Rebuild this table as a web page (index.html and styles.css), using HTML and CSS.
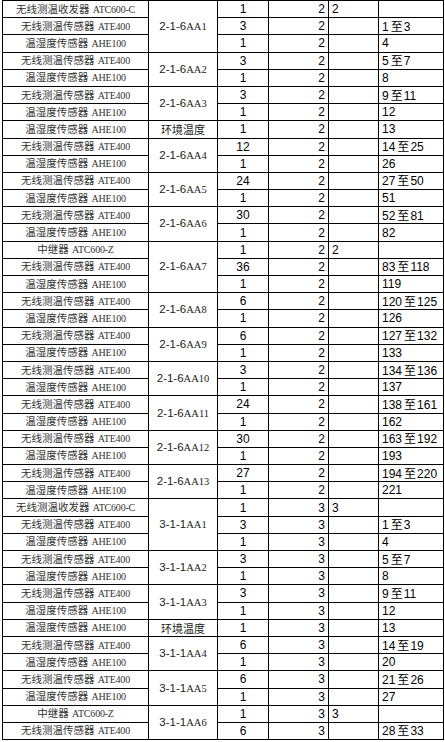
FILE: index.html
```html
<!DOCTYPE html>
<html>
<head>
<meta charset="utf-8">
<link rel="stylesheet" href="styles.css">
</head>
<body>
<table class="sheet">
<colgroup>
<col class="c1"><col class="c2"><col class="c3"><col class="c4"><col class="c5"><col class="c6">
</colgroup>
<tbody>
<tr><td class="dev"><span class="cn">无线测温收发器</span> <span class="en">ATC600-C</span></td><td class="loc" rowspan="3">2-1-6<span class="aa">AA1</span></td><td class="qty">1</td><td class="lay">2</td><td class="ch">2</td><td class="no"></td></tr>
<tr><td class="dev"><span class="cn">无线测温传感器</span> <span class="en">ATE400</span></td><td class="qty">3</td><td class="lay">2</td><td class="ch"></td><td class="no">1<span class="to">至</span>3</td></tr>
<tr><td class="dev"><span class="cn">温湿度传感器</span> <span class="en">AHE100</span></td><td class="qty">1</td><td class="lay">2</td><td class="ch"></td><td class="no">4</td></tr>

<tr><td class="dev"><span class="cn">无线测温传感器</span> <span class="en">ATE400</span></td><td class="loc" rowspan="2">2-1-6<span class="aa">AA2</span></td><td class="qty">3</td><td class="lay">2</td><td class="ch"></td><td class="no">5<span class="to">至</span>7</td></tr>
<tr><td class="dev"><span class="cn">温湿度传感器</span> <span class="en">AHE100</span></td><td class="qty">1</td><td class="lay">2</td><td class="ch"></td><td class="no">8</td></tr>

<tr><td class="dev"><span class="cn">无线测温传感器</span> <span class="en">ATE400</span></td><td class="loc" rowspan="2">2-1-6<span class="aa">AA3</span></td><td class="qty">3</td><td class="lay">2</td><td class="ch"></td><td class="no">9<span class="to">至</span>11</td></tr>
<tr><td class="dev"><span class="cn">温湿度传感器</span> <span class="en">AHE100</span></td><td class="qty">1</td><td class="lay">2</td><td class="ch"></td><td class="no">12</td></tr>

<tr><td class="dev"><span class="cn">温湿度传感器</span> <span class="en">AHE100</span></td><td class="loc env">环境温度</td><td class="qty">1</td><td class="lay">2</td><td class="ch"></td><td class="no">13</td></tr>

<tr><td class="dev"><span class="cn">无线测温传感器</span> <span class="en">ATE400</span></td><td class="loc" rowspan="2">2-1-6<span class="aa">AA4</span></td><td class="qty">12</td><td class="lay">2</td><td class="ch"></td><td class="no">14<span class="to">至</span>25</td></tr>
<tr><td class="dev"><span class="cn">温湿度传感器</span> <span class="en">AHE100</span></td><td class="qty">1</td><td class="lay">2</td><td class="ch"></td><td class="no">26</td></tr>

<tr><td class="dev"><span class="cn">无线测温传感器</span> <span class="en">ATE400</span></td><td class="loc" rowspan="2">2-1-6<span class="aa">AA5</span></td><td class="qty">24</td><td class="lay">2</td><td class="ch"></td><td class="no">27<span class="to">至</span>50</td></tr>
<tr><td class="dev"><span class="cn">温湿度传感器</span> <span class="en">AHE100</span></td><td class="qty">1</td><td class="lay">2</td><td class="ch"></td><td class="no">51</td></tr>

<tr><td class="dev"><span class="cn">无线测温传感器</span> <span class="en">ATE400</span></td><td class="loc" rowspan="2">2-1-6<span class="aa">AA6</span></td><td class="qty">30</td><td class="lay">2</td><td class="ch"></td><td class="no">52<span class="to">至</span>81</td></tr>
<tr><td class="dev"><span class="cn">温湿度传感器</span> <span class="en">AHE100</span></td><td class="qty">1</td><td class="lay">2</td><td class="ch"></td><td class="no">82</td></tr>

<tr><td class="dev"><span class="cn">中继器</span> <span class="en">ATC600-Z</span></td><td class="loc" rowspan="3">2-1-6<span class="aa">AA7</span></td><td class="qty">1</td><td class="lay">2</td><td class="ch">2</td><td class="no"></td></tr>
<tr><td class="dev"><span class="cn">无线测温传感器</span> <span class="en">ATE400</span></td><td class="qty">36</td><td class="lay">2</td><td class="ch"></td><td class="no">83<span class="to">至</span>118</td></tr>
<tr><td class="dev"><span class="cn">温湿度传感器</span> <span class="en">AHE100</span></td><td class="qty">1</td><td class="lay">2</td><td class="ch"></td><td class="no">119</td></tr>

<tr><td class="dev"><span class="cn">无线测温传感器</span> <span class="en">ATE400</span></td><td class="loc" rowspan="2">2-1-6<span class="aa">AA8</span></td><td class="qty">6</td><td class="lay">2</td><td class="ch"></td><td class="no">120<span class="to">至</span>125</td></tr>
<tr><td class="dev"><span class="cn">温湿度传感器</span> <span class="en">AHE100</span></td><td class="qty">1</td><td class="lay">2</td><td class="ch"></td><td class="no">126</td></tr>

<tr><td class="dev"><span class="cn">无线测温传感器</span> <span class="en">ATE400</span></td><td class="loc" rowspan="2">2-1-6<span class="aa">AA9</span></td><td class="qty">6</td><td class="lay">2</td><td class="ch"></td><td class="no">127<span class="to">至</span>132</td></tr>
<tr><td class="dev"><span class="cn">温湿度传感器</span> <span class="en">AHE100</span></td><td class="qty">1</td><td class="lay">2</td><td class="ch"></td><td class="no">133</td></tr>

<tr><td class="dev"><span class="cn">无线测温传感器</span> <span class="en">ATE400</span></td><td class="loc" rowspan="2">2-1-6<span class="aa">AA10</span></td><td class="qty">3</td><td class="lay">2</td><td class="ch"></td><td class="no">134<span class="to">至</span>136</td></tr>
<tr><td class="dev"><span class="cn">温湿度传感器</span> <span class="en">AHE100</span></td><td class="qty">1</td><td class="lay">2</td><td class="ch"></td><td class="no">137</td></tr>

<tr><td class="dev"><span class="cn">无线测温传感器</span> <span class="en">ATE400</span></td><td class="loc" rowspan="2">2-1-6<span class="aa">AA11</span></td><td class="qty">24</td><td class="lay">2</td><td class="ch"></td><td class="no">138<span class="to">至</span>161</td></tr>
<tr><td class="dev"><span class="cn">温湿度传感器</span> <span class="en">AHE100</span></td><td class="qty">1</td><td class="lay">2</td><td class="ch"></td><td class="no">162</td></tr>

<tr><td class="dev"><span class="cn">无线测温传感器</span> <span class="en">ATE400</span></td><td class="loc" rowspan="2">2-1-6<span class="aa">AA12</span></td><td class="qty">30</td><td class="lay">2</td><td class="ch"></td><td class="no">163<span class="to">至</span>192</td></tr>
<tr><td class="dev"><span class="cn">温湿度传感器</span> <span class="en">AHE100</span></td><td class="qty">1</td><td class="lay">2</td><td class="ch"></td><td class="no">193</td></tr>

<tr><td class="dev"><span class="cn">无线测温传感器</span> <span class="en">ATE400</span></td><td class="loc" rowspan="2">2-1-6<span class="aa">AA13</span></td><td class="qty">27</td><td class="lay">2</td><td class="ch"></td><td class="no">194<span class="to">至</span>220</td></tr>
<tr><td class="dev"><span class="cn">温湿度传感器</span> <span class="en">AHE100</span></td><td class="qty">1</td><td class="lay">2</td><td class="ch"></td><td class="no">221</td></tr>

<tr><td class="dev"><span class="cn">无线测温收发器</span> <span class="en">ATC600-C</span></td><td class="loc" rowspan="3">3-1-1<span class="aa">AA1</span></td><td class="qty">1</td><td class="lay">3</td><td class="ch">3</td><td class="no"></td></tr>
<tr><td class="dev"><span class="cn">无线测温传感器</span> <span class="en">ATE400</span></td><td class="qty">3</td><td class="lay">3</td><td class="ch"></td><td class="no">1<span class="to">至</span>3</td></tr>
<tr><td class="dev"><span class="cn">温湿度传感器</span> <span class="en">AHE100</span></td><td class="qty">1</td><td class="lay">3</td><td class="ch"></td><td class="no">4</td></tr>

<tr><td class="dev"><span class="cn">无线测温传感器</span> <span class="en">ATE400</span></td><td class="loc" rowspan="2">3-1-1<span class="aa">AA2</span></td><td class="qty">3</td><td class="lay">3</td><td class="ch"></td><td class="no">5<span class="to">至</span>7</td></tr>
<tr><td class="dev"><span class="cn">温湿度传感器</span> <span class="en">AHE100</span></td><td class="qty">1</td><td class="lay">3</td><td class="ch"></td><td class="no">8</td></tr>

<tr><td class="dev"><span class="cn">无线测温传感器</span> <span class="en">ATE400</span></td><td class="loc" rowspan="2">3-1-1<span class="aa">AA3</span></td><td class="qty">3</td><td class="lay">3</td><td class="ch"></td><td class="no">9<span class="to">至</span>11</td></tr>
<tr><td class="dev"><span class="cn">温湿度传感器</span> <span class="en">AHE100</span></td><td class="qty">1</td><td class="lay">3</td><td class="ch"></td><td class="no">12</td></tr>

<tr><td class="dev"><span class="cn">温湿度传感器</span> <span class="en">AHE100</span></td><td class="loc env">环境温度</td><td class="qty">1</td><td class="lay">3</td><td class="ch"></td><td class="no">13</td></tr>

<tr><td class="dev"><span class="cn">无线测温传感器</span> <span class="en">ATE400</span></td><td class="loc" rowspan="2">3-1-1<span class="aa">AA4</span></td><td class="qty">6</td><td class="lay">3</td><td class="ch"></td><td class="no">14<span class="to">至</span>19</td></tr>
<tr><td class="dev"><span class="cn">温湿度传感器</span> <span class="en">AHE100</span></td><td class="qty">1</td><td class="lay">3</td><td class="ch"></td><td class="no">20</td></tr>

<tr><td class="dev"><span class="cn">无线测温传感器</span> <span class="en">ATE400</span></td><td class="loc" rowspan="2">3-1-1<span class="aa">AA5</span></td><td class="qty">6</td><td class="lay">3</td><td class="ch"></td><td class="no">21<span class="to">至</span>26</td></tr>
<tr><td class="dev"><span class="cn">温湿度传感器</span> <span class="en">AHE100</span></td><td class="qty">1</td><td class="lay">3</td><td class="ch"></td><td class="no">27</td></tr>

<tr><td class="dev"><span class="cn">中继器</span> <span class="en">ATC600-Z</span></td><td class="loc" rowspan="2">3-1-1<span class="aa">AA6</span></td><td class="qty">1</td><td class="lay">3</td><td class="ch">3</td><td class="no"></td></tr>
<tr><td class="dev"><span class="cn">无线测温传感器</span> <span class="en">ATE400</span></td><td class="qty">6</td><td class="lay">3</td><td class="ch"></td><td class="no">28<span class="to">至</span>33</td></tr>
</tbody>
</table>
</body>
</html>
```

FILE: styles.css
```css
html, body {
  margin: 0;
  padding: 0;
  background: #ffffff;
}

.sheet {
  margin: 0 0 0 2px;
  border-collapse: collapse;
  table-layout: fixed;
  width: 441px;
  font-family: "Liberation Sans", "Noto Sans CJK SC", sans-serif;
  font-size: 12px;
  color: #000;
}

.c1 { width: 146px; }
.c2 { width: 69px; }
.c3 { width: 51px; }
.c4 { width: 60px; }
.c5 { width: 50px; }
.c6 { width: 65px; }

.sheet tr {
  height: 17.2px;
}

.sheet td {
  border: 1px solid #000;
  padding: 0 3px;
  line-height: 14px;
  white-space: nowrap;
  overflow: hidden;
  vertical-align: middle;
}

.dev {
  text-align: center;
  color: #333;
}

.dev .cn {
  font-family: "Noto Sans CJK SC", sans-serif;
  font-size: 10.5px;
}

.dev .en {
  font-family: "Liberation Serif", serif;
  font-size: 10px;
  letter-spacing: -0.2px;
}

.loc {
  text-align: center;
  font-size: 11.5px;
  color: #222;
}

.loc .aa {
  font-family: "Liberation Serif", serif;
  font-size: 10.5px;
}

.loc.env {
  font-family: "Noto Sans CJK SC", sans-serif;
  font-size: 11px;
}

.qty {
  text-align: center;
}

.lay {
  text-align: right;
  padding-right: 5px;
}

.ch {
  text-align: left;
}

.no {
  text-align: left;
}

.to {
  font-family: "Noto Sans CJK SC", sans-serif;
  font-size: 12px;
  margin: 0 1px 0 2px;
}
```
